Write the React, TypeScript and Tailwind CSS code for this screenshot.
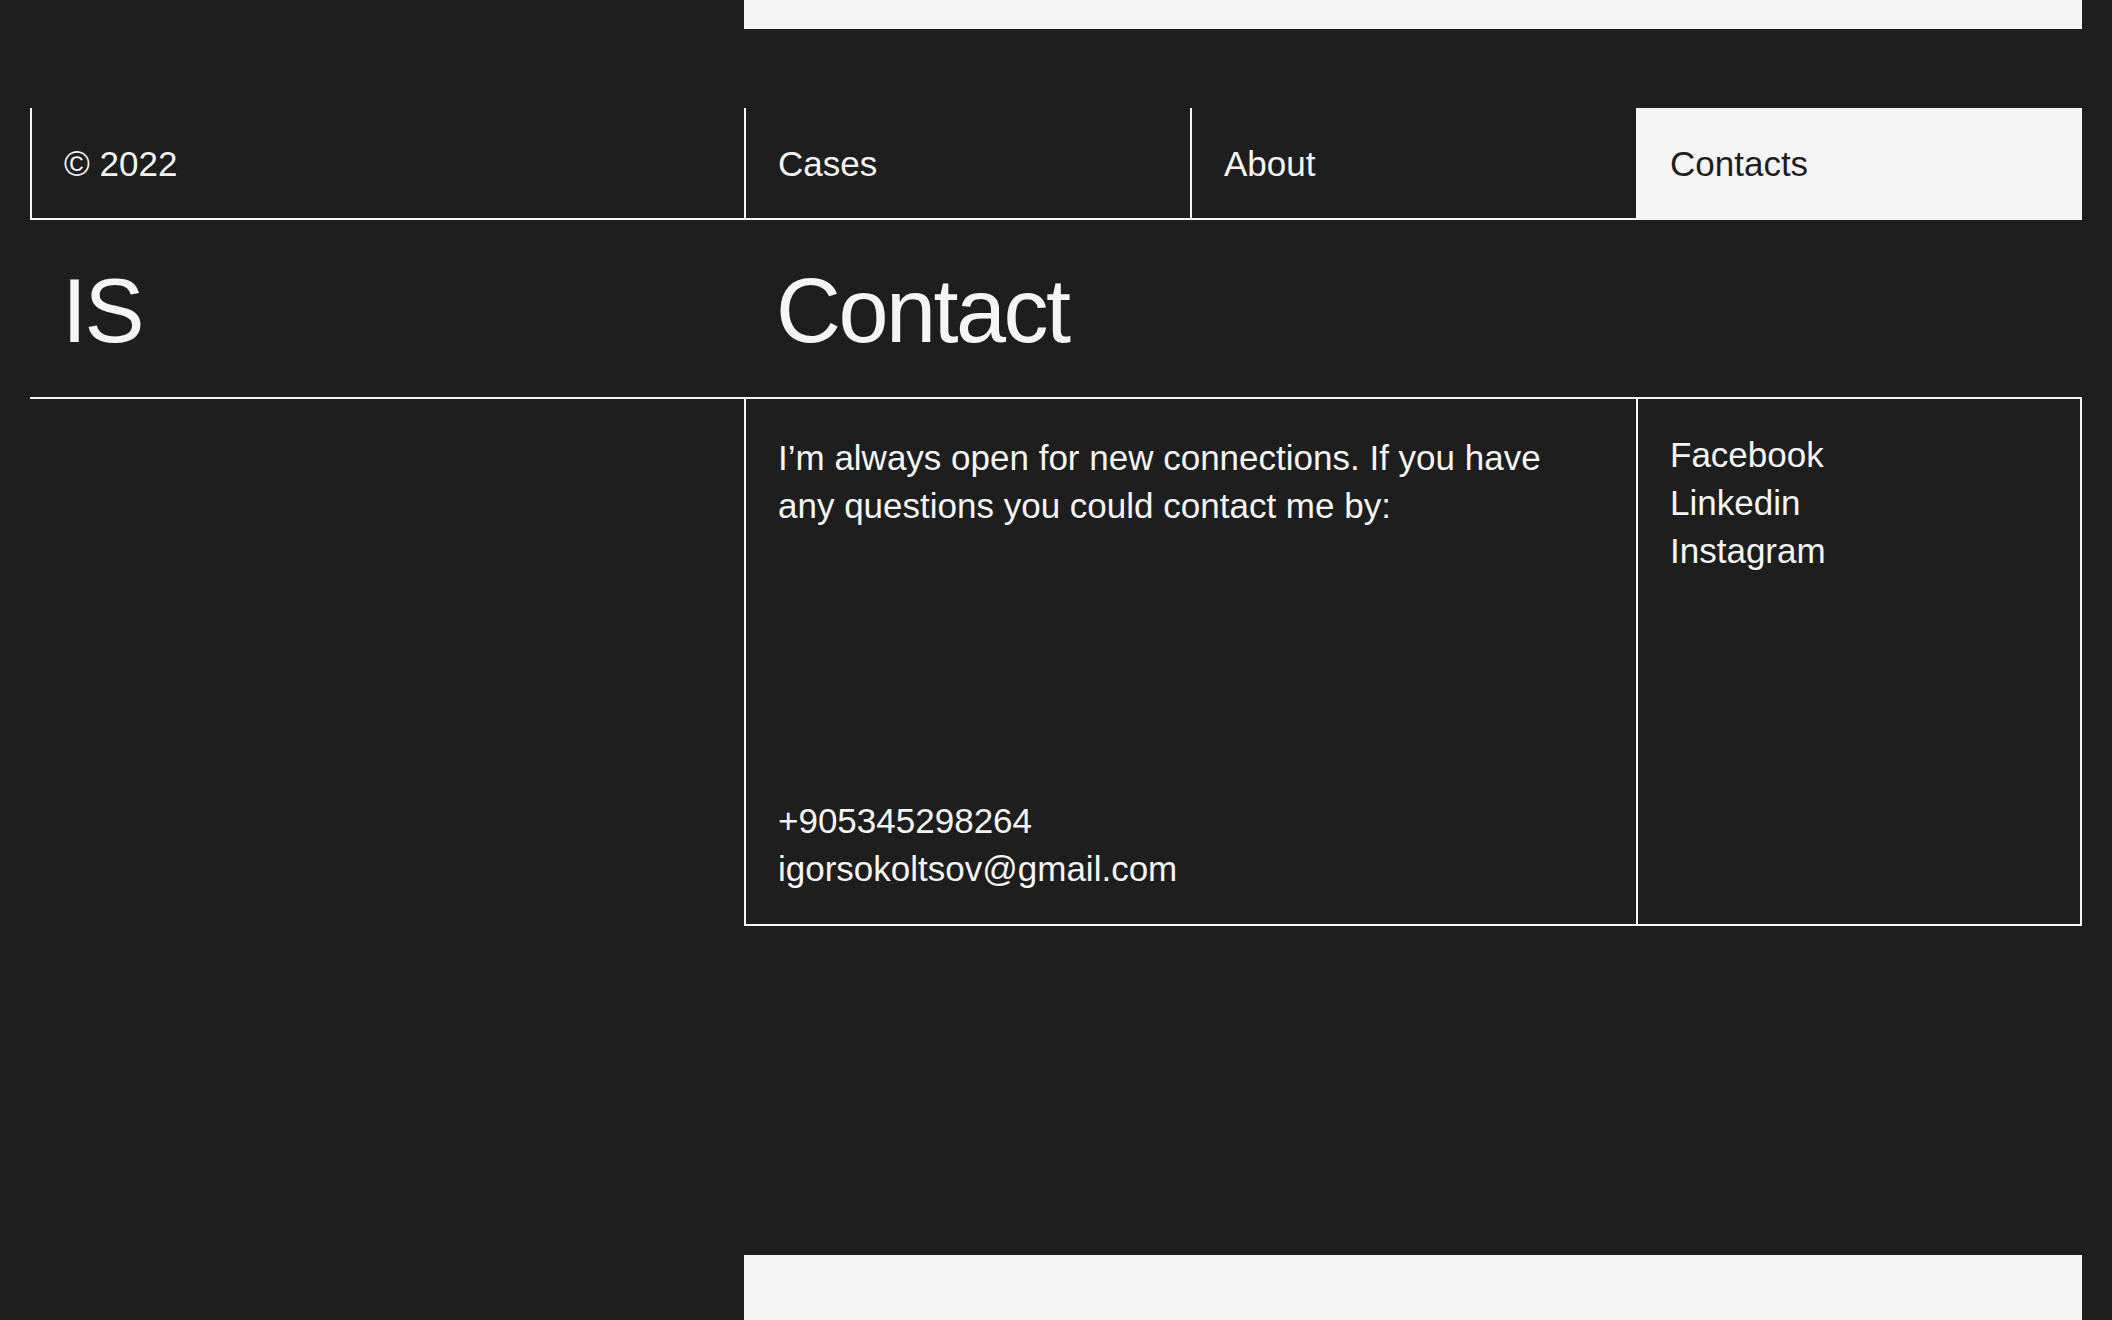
import React from "react";

const navItems = [
  { label: "Cases", active: false },
  { label: "About", active: false },
  { label: "Contacts", active: true },
];

const socials = ["Facebook", "Linkedin", "Instagram"];

export default function App() {
  return (
    <div className="min-h-screen overflow-hidden bg-[#1e1e1e] px-[30px] font-['Liberation_Sans',Arial,sans-serif] text-[#f5f5f5]">
      {/* tail of the previous section */}
      <div className="grid grid-cols-[714px_1fr]">
        <div />
        <div className="h-[29px] bg-[#f5f5f5]" />
      </div>

      {/* nav row */}
      <header className="mt-[79px] grid grid-cols-[714px_1fr_1fr_1fr] border-b-2 border-[#f5f5f5] text-[35px] leading-none">
        <div className="flex h-[110px] items-center border-l-2 border-[#f5f5f5] px-8">© 2022</div>
        {navItems.map((item) => (
          <a
            key={item.label}
            href="#"
            className={
              item.active
                ? "flex h-[110px] items-center border-l-2 border-[#f5f5f5] bg-[#f5f5f5] px-8 text-[#1e1e1e]"
                : "flex h-[110px] items-center border-l-2 border-[#f5f5f5] px-8"
            }
          >
            {item.label}
          </a>
        ))}
      </header>

      {/* title row */}
      <div className="grid h-[179px] grid-cols-[714px_1fr] items-center border-b-2 border-[#f5f5f5] pt-1 text-[90px] leading-none tracking-[-0.028em]">
        <div className="px-8">IS</div>
        <h1 className="px-8">Contact</h1>
      </div>

      {/* contact details */}
      <div className="grid h-[527px] grid-cols-[714px_1fr_1fr_1fr] text-[35px] leading-[48px]">
        <div />
        <div className="col-span-2 flex flex-col justify-between border-b-2 border-l-2 border-[#f5f5f5] px-8 pb-[31px] pt-[35px]">
          <p className="max-w-[790px]">
            I’m always open for new connections. If you have any questions you could contact me by:
          </p>
          <div className="flex flex-col">
            <a href="#">+905345298264</a>
            <a href="#">igorsokoltsov@gmail.com</a>
          </div>
        </div>
        <div className="flex flex-col border-x-2 border-b-2 border-[#f5f5f5] px-8 pt-8">
          {socials.map((s) => (
            <a key={s} href="#">
              {s}
            </a>
          ))}
        </div>
      </div>

      {/* head of the next section */}
      <div className="mt-[329px] grid grid-cols-[714px_1fr]">
        <div />
        <div className="h-[200px] bg-[#f5f5f5]" />
      </div>
    </div>
  );
}
